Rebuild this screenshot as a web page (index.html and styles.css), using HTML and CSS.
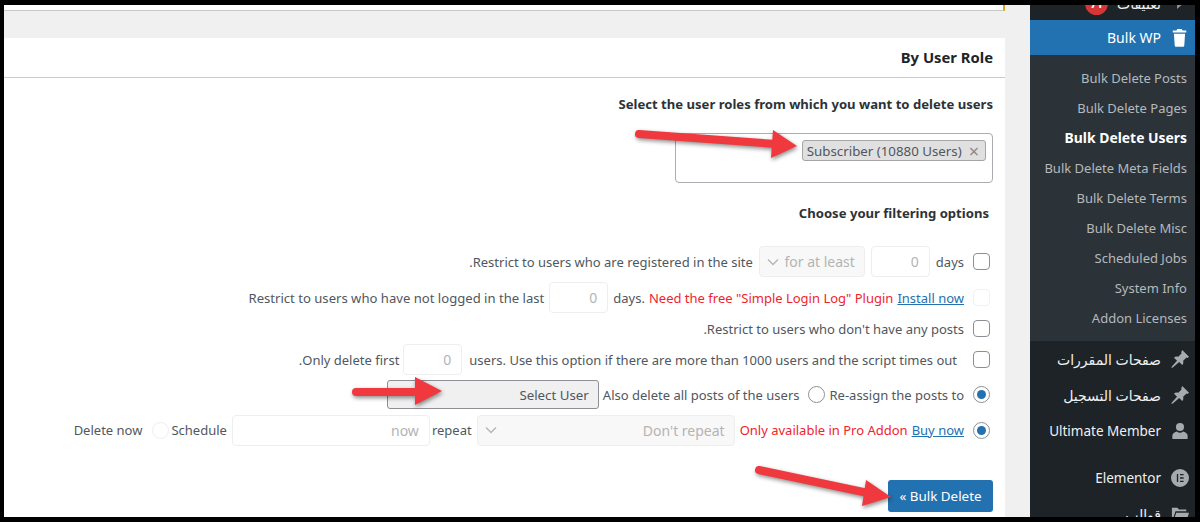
FILE: index.html
```html
<!DOCTYPE html>
<html lang="ar" dir="rtl">
<head>
<meta charset="utf-8">
<title>Bulk WP</title>
<link rel="stylesheet" href="styles.css">
</head>
<body>
<div class="frame">
  <main class="main">
    <div class="notice"></div>
    <section class="card">
      <header class="card-head">By User Role</header>
      <div class="card-body">
        <h3 class="label">Select the user roles from which you want to delete users</h3>
        <div class="multi"><span class="tag"><span class="tag-x">×</span><span class="tag-text" dir="ltr">Subscriber (10880 Users)</span></span></div>
        <h3 class="label sub-label">Choose your filtering options</h3>

        <div class="row r1">
          <span class="check"></span>
          <span>days</span>
          <span class="field num">0</span>
          <span class="field sel s-for"><span>for at least</span><svg class="chev" viewBox="0 0 12 8"><path d="M1 1.500l5 5 5-5" fill="none" stroke="#b5b5b5" stroke-width="1.300"/></svg></span>
          <span>Restrict to users who are registered in the site.</span>
        </div>
        <div class="row r2 tight">
          <span class="check off"></span>
          <a class="link" href="#">Install now</a>
          <span class="red" dir="ltr">Need the free "Simple Login Log" Plugin</span>
          <span class="days-dot" dir="ltr">days.</span>
          <span class="field num">0</span>
          <span class="wide">Restrict to users who have not logged in the last</span>
        </div>
        <div class="row r3">
          <span class="check"></span>
          <span>Restrict to users who don't have any posts.</span>
        </div>
        <div class="row r4">
          <span class="check"></span>
          <span class="long">users. Use this option if there are more than 1000 users and the script times out</span>
          <span class="field num">0</span>
          <span class="only">Only delete first.</span>
        </div>
        <div class="row r5">
          <span class="radio on"></span>
          <span>Re-assign the posts to</span>
          <span class="radio plain"></span>
          <span>Also delete all posts of the users</span>
          <span class="user-select"><span>Select User</span><i class="dot"></i></span>
        </div>
        <div class="row r6 tight">
          <span class="radio on"></span>
          <a class="link" href="#">Buy now</a>
          <span class="red">Only available in Pro Addon</span>
          <span class="field sel s-repeat"><span>Don't repeat</span><svg class="chev" viewBox="0 0 12 8"><path d="M1 1.500l5 5 5-5" fill="none" stroke="#b5b5b5" stroke-width="1.300"/></svg></span>
          <span>repeat</span>
          <span class="field s-now">now</span>
          <span>Schedule</span>
          <span class="radio off"></span>
          <span>Delete now</span>
        </div>
        <button class="primary" type="button">Bulk Delete »</button>
      </div>
    </section>
  </main>

  <aside class="side">
    <div class="cut"><div class="cut-in">
      <svg class="caret" viewBox="0 0 8 12"><path d="M1 0l7 6-7 6z" fill="#8c8f94"/></svg>
      <span>تعليقات</span><b class="badge">71</b>
    </div></div>
    <div class="current">
      <svg class="ic trash" viewBox="0 0 16 20"><path fill="#fff" d="M5.500 0h5l.8 1.800H15.500v2.200H.5V1.800h4.200zM1.800 5.400h12.400l-.9 13c-.1.900-.6 1.400-1.500 1.400H4.200c-.9 0-1.400-.5-1.500-1.400z"/></svg>
      <span>Bulk WP</span>
    </div>
    <ul class="sub">
      <li>Bulk Delete Posts</li>
      <li>Bulk Delete Pages</li>
      <li class="active">Bulk Delete Users</li>
      <li>Bulk Delete Meta Fields</li>
      <li>Bulk Delete Terms</li>
      <li>Bulk Delete Misc</li>
      <li>Scheduled Jobs</li>
      <li>System Info</li>
      <li>Addon Licenses</li>
    </ul>
    <div class="item">
      <svg class="ic" viewBox="0 0 20 20"><path fill="#a7aaad" d="M12.500 0l7.500 7.500-1.700 1.300-1-.6-3.800 3.800c.5 2 .1 3.700-1 4.800l-3.400-3.400L2 19.500l-1.500.4.400-1.500 5.800-6.500-3.400-3.400c1.100-1.100 2.800-1.500 4.800-1l3.800-3.800-.6-1z"/></svg>
      <span>صفحات المقررات</span>
    </div>
    <div class="item">
      <svg class="ic" viewBox="0 0 20 20"><path fill="#a7aaad" d="M12.500 0l7.500 7.500-1.700 1.300-1-.6-3.800 3.800c.5 2 .1 3.700-1 4.800l-3.400-3.400L2 19.500l-1.500.4.400-1.500 5.800-6.500-3.400-3.400c1.100-1.100 2.800-1.500 4.800-1l3.800-3.800-.6-1z"/></svg>
      <span>صفحات التسجيل</span>
    </div>
    <div class="item">
      <svg class="ic" viewBox="0 0 20 20"><circle cx="10" cy="5.500" r="4.500" fill="#a7aaad"/><path fill="#a7aaad" d="M1.500 18v-2.500c0-3 3-4.500 5-5 1 1 2.200 1.500 3.500 1.500s2.500-.5 3.500-1.500c2 .5 5 2 5 5V18c0 .6-.4 1-1 1h-15c-.6 0-1-.4-1-1z"/></svg>
      <span class="um">Ultimate Member</span>
    </div>
    <div class="item gap">
      <svg class="ic" viewBox="0 0 20 20"><path fill="#a7aaad" fill-rule="evenodd" d="M10 0a10 10 0 1 0 0 20 10 10 0 0 0 0-20zM6.500 5.500H8v9H6.500zM10 5.500h4V7h-4zM10 9.250h4v1.500h-4zM10 13h4v1.500h-4z"/></svg>
      <span class="um">Elementor</span>
    </div>
    <div class="item">
      <svg class="ic" viewBox="0 0 20 20"><path fill="#a7aaad" d="M1 3h6l2 2h8v2H5L2 16H1zM5.800 8.500H20L17.500 17H3z"/></svg>
      <span>قوالب</span>
    </div>
  </aside>
</div>

<svg class="arrows" viewBox="0 0 1200 522" aria-hidden="true">
  <g class="arrow">
    <path d="M639 134L776 144" class="shaft"/>
    <path d="M773 130L797 146L771 158z" class="head"/>
  </g>
  <g class="arrow">
    <path d="M356 392L418 392" class="shaft"/>
    <path d="M415 377L442 391L415 405z" class="head"/>
  </g>
  <g class="arrow">
    <path d="M759 470L868 493" class="shaft"/>
    <path d="M866 480L891 497L862 506z" class="head"/>
  </g>
</svg>
</body>
</html>
```

FILE: styles.css
```css
* { box-sizing: border-box; }
html, body { margin: 0; height: 522px; overflow: hidden; }
body {
  background: #000;
  font-family: "Noto Sans", "DejaVu Sans", sans-serif;
  font-size: 13px;
  color: #50575e;
  position: relative;
}
.frame {
  display: flex;
  direction: ltr;
  height: 512px;
  margin: 5px 5px 0 4px;
  overflow: hidden;
}
.main { flex: 1; min-width: 0; direction: rtl; background: #f0f0f1; }
.notice {
  height: 6px;
  margin-right: 25px;
  background: #fff;
  border-bottom: 1px solid #c9c9c9;
  border-right: 2px solid #dba617;
}
.card {
  margin: 27px 25px 0 0;
  background: #fff;
  height: 479px;
  border-radius: 2px 0 0 0;
}
.card-head {
  height: 40px;
  line-height: 38px;
  padding-right: 12px;
  font-weight: 700;
  font-size: 14.800px;
  color: #1d2327;
  border-bottom: 1px solid #c9cbce;
}
.card-body { padding: 16px 12px 0 0; }
.label {
  margin: 0;
  height: 20px;
  line-height: 20px;
  font-size: 13.100px;
  font-weight: 700;
  color: #2c3338;
}
.multi {
  display: flex;
  justify-content: flex-start;
  width: 318px;
  height: 50px;
  margin-top: 19px;
  padding: 6px 6px 0 0;
  border: 1px solid #a9acb0;
  border-radius: 4px;
}
.tag {
  display: flex;
  align-items: center;
  gap: 7px;
  width: 184px;
  height: 21px;
  padding: 0 6px 0 2px;
  background: #e0e0e0;
  border: 1px solid #a5a5a5;
  border-radius: 3px;
  color: #50575e;
  font-size: 13.300px;
  white-space: nowrap;
}
.tag-x { color: #888; font-size: 18px; line-height: 1; }
.sub-label { margin-top: 20px; padding-right: 4px; }
.row {
  display: flex;
  align-items: center;
  gap: 6px;
  padding-right: 3px;
  height: 31px;
  white-space: nowrap;
}
.tight { gap: 5px; }
.r1 { margin-top: 23px; }
.r2 { margin-top: 5px; }
.r5 { margin-top: 5px; height: 29px; }
.r6 { margin-top: 5px; height: 32px; }
.check, .radio {
  flex: none;
  width: 17px;
  height: 17px;
  margin-left: 3px;
  border: 1.500px solid #8c8f94;
  background: #fff;
}
.tight > .check, .tight > .radio.on { margin-left: 4px; }
.check { border-radius: 4px; }
.check.off { border: 1px solid #f1f1f1; }
.radio { border-radius: 50%; position: relative; }
.radio.on::after {
  content: "";
  position: absolute;
  inset: 3px;
  border-radius: 50%;
  background: #2271b1;
}
.radio.plain { margin: 0 -1px 0 2px; }
.radio.off { margin: 0 -3px 0 5px; border: 1px solid #eee; }
.field {
  flex: none;
  display: flex;
  align-items: center;
  height: 31px;
  padding: 0 10px;
  border: 1px solid #eeeeee;
  border-radius: 4px;
  color: #b4b4b4;
  font-size: 14px;
}
.num { width: 59px; }
.sel { justify-content: space-between; padding: 0 9px 0 7px; background: #f8f8f8; }
.s-for { width: 106px; }
.s-repeat { width: 258px; }
.s-now { width: 198px; margin-right: -3px; }
.chev { width: 12px; height: 8px; flex: none; }
.red { color: #f0232f; }
.link { color: #2271b1; text-decoration: underline; }
.tight > .red { margin-right: -1px; }
.days-dot { margin-right: -1px; }
.wide { font-size: 13.100px; }
.long { margin: 0 7px 0 1px; }
.only { margin-right: -2px; }
.user-select {
  flex: none;
  display: flex;
  justify-content: space-between;
  align-items: center;
  width: 212px;
  height: 29px;
  margin-right: -2px;
  padding: 0 9px 0 10px;
  background: #f0f0f0;
  border: 1px solid #8c8f94;
  border-radius: 3px;
  font-size: 13.300px;
}
.dot { width: 2px; height: 2px; background: #444; }
.primary {
  display: block;
  width: 105px;
  height: 32px;
  margin: 34px 0 0 0;
  padding: 0;
  background: #2271b1;
  border: 0;
  border-radius: 3px;
  color: #fff;
  font: inherit;
  font-size: 13.400px;
}
.side {
  flex: none;
  width: 165px;
  direction: rtl;
  background: #1d2327;
  color: #f0f0f1;
  font-size: 14px;
}
.cut { height: 15px; overflow: hidden; }
.cut-in {
  display: flex;
  align-items: center;
  height: 20px;
  margin-top: -12px;
  padding-right: 11px;
  gap: 9px;
}
.caret { width: 8px; height: 12px; flex: none; margin-left: 6px; }
.badge {
  width: 23px;
  height: 23px;
  border-radius: 50%;
  background: #d63638;
  color: #fff;
  font-size: 11px;
  text-align: center;
  line-height: 23px;
}
.current {
  display: flex;
  align-items: center;
  gap: 11px;
  height: 35px;
  padding-right: 8px;
  background: #2271b1;
  color: #fff;
}
.ic { width: 18px; height: 18px; flex: none; }
.trash { width: 15px; height: 18px; }
.sub {
  margin: 0;
  padding: 8px 8px 0 0;
  height: 286px;
  list-style: none;
  background: #2c3338;
  color: #b4b9be;
  font-size: 13px;
}
.sub li { height: 30px; line-height: 30px; }
.sub .active { color: #fff; font-weight: 700; font-size: 13.900px; }
.item {
  display: flex;
  align-items: center;
  gap: 10px;
  height: 36px;
  padding-right: 6px;
}
.um { font-size: 13.500px; }
.gap { margin-top: 11px; }
.arrows {
  position: absolute;
  left: 0;
  top: 0;
  width: 1200px;
  height: 522px;
  pointer-events: none;
}
.arrow { filter: drop-shadow(1px 2px 2px rgba(0,0,0,.45)); }
.shaft { fill: none; stroke: #f0383f; stroke-width: 8; stroke-linecap: round; }
.head { fill: #f0383f; }
```
